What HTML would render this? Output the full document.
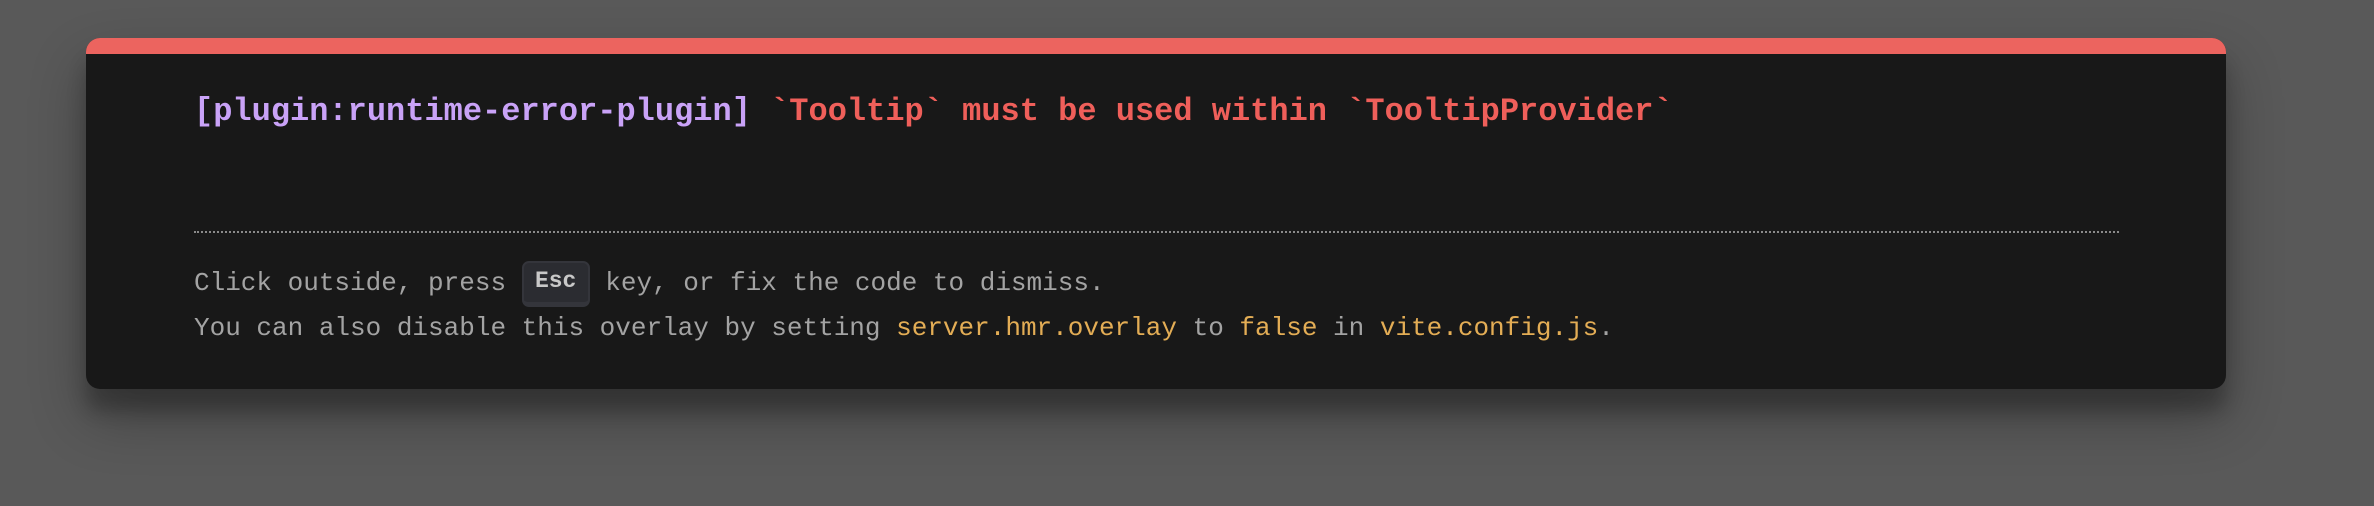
<!DOCTYPE html>
<html><head><meta charset="utf-8"><style>
html,body{margin:0;padding:0;width:2374px;height:506px;background:#595959;overflow:hidden}
.win{position:absolute;left:86px;top:38px;width:2140px;height:351px;background:#181818;border-radius:14px;overflow:hidden;box-shadow:0 28px 56px rgba(0,0,0,.3),0 22px 18px rgba(0,0,0,.22)}
.bar{position:absolute;left:0;top:0;right:0;height:16px;background:#ec645f}
.t{position:absolute;left:108px;top:54px;font:bold 32px/40px "Liberation Mono",monospace;white-space:pre;color:#ef5f5a}
.p{color:#c9a2f7}
.hr{position:absolute;left:108px;top:193px;width:1925px;border-top:2px dotted #8a8a8a}
.b{position:absolute;left:108px;font:26px/45px "Liberation Mono",monospace;white-space:pre;color:#a3a3a3}
.y{color:#e3ad55}
kbd{display:inline-block;width:68px;height:46px;box-sizing:border-box;background:#2b2c31;border:2px solid #34353b;border-bottom-width:5px;border-radius:7px;font:bold 23px/37px "Liberation Mono",monospace;color:#c8c8c8;text-align:center;vertical-align:baseline;position:relative;top:-3px;margin:0}
</style></head><body>
<div class="win"><div class="bar"></div>
<div class="t"><span class="p">[plugin:runtime-error-plugin]</span> `Tooltip` must be used within `TooltipProvider`</div>
<div class="hr"></div>
<div class="b" style="top:223px">Click outside, press <kbd>Esc</kbd> key, or fix the code to dismiss.</div>
<div class="b" style="top:268px">You can also disable this overlay by setting <span class="y">server.hmr.overlay</span> to <span class="y">false</span> in <span class="y">vite.config.js</span>.</div>
</div>
</body></html>
